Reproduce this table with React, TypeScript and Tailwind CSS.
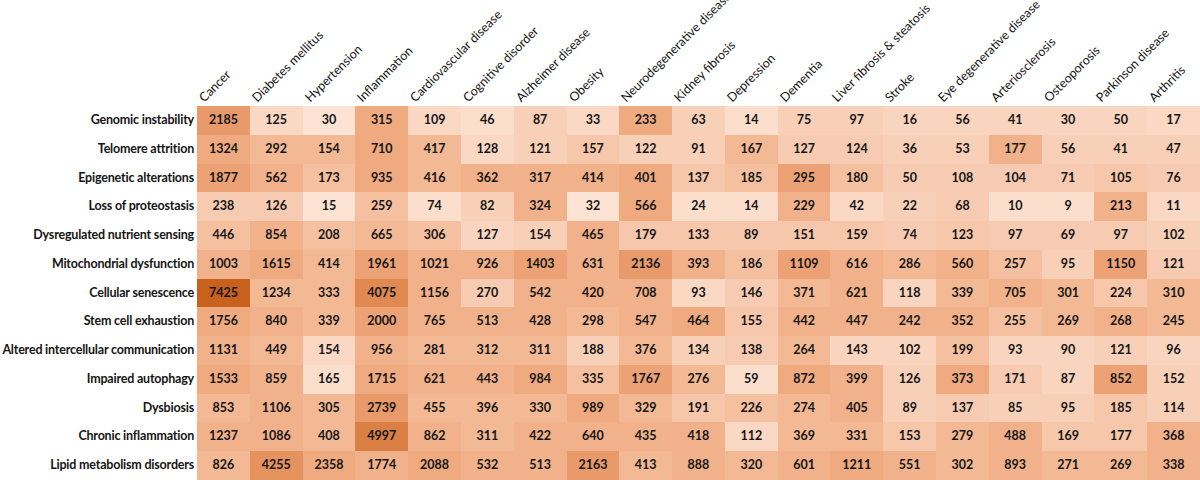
import React from "react";

const cols = [
  "Cancer",
  "Diabetes mellitus",
  "Hypertension",
  "Inflammation",
  "Cardiovascular disease",
  "Cognitive disorder",
  "Alzheimer disease",
  "Obesity",
  "Neurodegenerative disease",
  "Kidney fibrosis",
  "Depression",
  "Dementia",
  "Liver fibrosis & steatosis",
  "Stroke",
  "Eye degenerative disease",
  "Arteriosclerosis",
  "Osteoporosis",
  "Parkinson disease",
  "Arthritis",
];

type Row = { label: string; v: number[]; t: number[] };

const rows: Row[] = [
  {
    label: "Genomic instability",
    v: [2185, 125, 30, 315, 109, 46, 87, 33, 233, 63, 14, 75, 97, 16, 56, 41, 30, 50, 17],
    t: [7, 2, 1, 6, 2, 1.5, 3, 2, 6, 3, 1.5, 3, 3, 2.5, 2.5, 2.5, 2.5, 2.5, 2],
  },
  {
    label: "Telomere attrition",
    v: [1324, 292, 154, 710, 417, 128, 121, 157, 122, 91, 167, 127, 124, 36, 53, 177, 56, 41, 47],
    t: [6, 5, 5, 6, 5, 2, 3, 4, 3, 3, 5, 3.5, 3.5, 3, 3, 5.5, 3, 3, 3],
  },
  {
    label: "Epigenetic alterations",
    v: [1877, 562, 173, 935, 416, 362, 317, 414, 401, 137, 185, 295, 180, 50, 108, 104, 71, 105, 76],
    t: [6.5, 5.5, 4.5, 6, 5, 5.5, 5.5, 5.5, 6, 4, 4.5, 6.5, 4.5, 3.5, 3.5, 3.5, 3.5, 4, 3.5],
  },
  {
    label: "Loss of proteostasis",
    v: [238, 126, 15, 259, 74, 82, 324, 32, 566, 24, 14, 229, 42, 22, 68, 10, 9, 213, 11],
    t: [3.5, 3.5, 1, 4.5, 1.5, 3, 5.5, 1, 6, 1.5, 1.5, 5.5, 2, 3, 3.5, 1.5, 1.5, 5.5, 2],
  },
  {
    label: "Dysregulated nutrient sensing",
    v: [446, 854, 208, 665, 306, 127, 154, 465, 179, 133, 89, 151, 159, 74, 123, 97, 69, 97, 102],
    t: [4.5, 5.5, 4.5, 5, 4.5, 2.5, 3, 5.5, 4, 4, 4, 4, 4, 3.5, 4, 3.5, 3.5, 3.5, 3],
  },
  {
    label: "Mitochondrial dysfunction",
    v: [1003, 1615, 414, 1961, 1021, 926, 1403, 631, 2136, 393, 186, 1109, 616, 286, 560, 257, 95, 1150, 121],
    t: [5.5, 6, 5, 6.5, 5.5, 5.5, 6.5, 5.5, 7, 5.5, 4.5, 6.5, 5.5, 5, 5.5, 4.5, 3, 6.5, 3.5],
  },
  {
    label: "Cellular senescence",
    v: [7425, 1234, 333, 4075, 1156, 270, 542, 420, 708, 93, 146, 371, 621, 118, 339, 705, 301, 224, 310],
    t: [10, 5, 5, 8, 5.5, 3.5, 5.5, 5.5, 5.5, 2, 3.5, 5, 5.5, 2.5, 5, 5.5, 5, 4, 5],
  },
  {
    label: "Stem cell exhaustion",
    v: [1756, 840, 339, 2000, 765, 513, 428, 298, 547, 464, 155, 442, 447, 242, 352, 255, 269, 268, 245],
    t: [6, 5.5, 5, 6.5, 5.5, 5.5, 5.5, 5, 5.5, 6, 4, 5.5, 5.5, 5.5, 5.5, 4.5, 5, 5.5, 5],
  },
  {
    label: "Altered intercellular communication",
    v: [1131, 449, 154, 956, 281, 312, 311, 188, 376, 134, 138, 264, 143, 102, 199, 93, 90, 121, 96],
    t: [5.5, 5, 2, 5.5, 5, 5, 5, 3, 5, 3, 3.5, 5, 2.5, 2.5, 4.5, 2.5, 2.5, 3, 2.5],
  },
  {
    label: "Impaired autophagy",
    v: [1533, 859, 165, 1715, 621, 443, 984, 335, 1767, 276, 59, 872, 399, 126, 373, 171, 87, 852, 152],
    t: [6, 5.5, 1.5, 6, 5.5, 5.5, 6, 4.5, 6.5, 5, 1.5, 6, 5.5, 3, 6, 3.5, 2.5, 6.5, 3],
  },
  {
    label: "Dysbiosis",
    v: [853, 1106, 305, 2739, 455, 396, 330, 989, 329, 191, 226, 274, 405, 89, 137, 85, 95, 185, 114],
    t: [5, 5.5, 5, 7, 5, 5, 5, 6, 5, 4, 4.5, 5, 5.5, 3, 3.5, 3, 3, 4, 3],
  },
  {
    label: "Chronic inflammation",
    v: [1237, 1086, 408, 4997, 862, 311, 422, 640, 435, 418, 112, 369, 331, 153, 279, 488, 169, 177, 368],
    t: [5.5, 5.5, 5, 8.5, 5.5, 5, 5.5, 5.5, 5.5, 5.5, 2, 5, 5, 4, 5, 5.5, 4, 4, 5.5],
  },
  {
    label: "Lipid metabolism disorders",
    v: [826, 4255, 2358, 1774, 2088, 532, 513, 2163, 413, 888, 320, 601, 1211, 551, 302, 893, 271, 269, 338],
    t: [5, 7.5, 6, 5.5, 6, 5.5, 5.5, 7, 5, 5.5, 5, 5.5, 6, 5.5, 5, 5.5, 5, 5, 5.5],
  },
];

const stops: [number, [number, number, number]][] = [
  [0, [253, 238, 228]],
  [2, [250, 216, 196]],
  [4, [246, 199, 170]],
  [5, [243, 184, 148]],
  [6, [239, 170, 128]],
  [7, [233, 154, 106]],
  [8, [224, 138, 82]],
  [10, [200, 96, 30]],
];

function colorFor(t: number): string {
  for (let i = 0; i < stops.length - 1; i++) {
    const [a, ca] = stops[i];
    const [b, cb] = stops[i + 1];
    if (t >= a && t <= b) {
      const f = (t - a) / (b - a);
      const c = ca.map((x, k) => Math.round(x + (cb[k] - x) * f));
      return `rgb(${c[0]},${c[1]},${c[2]})`;
    }
  }
  const c = stops[stops.length - 1][1];
  return `rgb(${c[0]},${c[1]},${c[2]})`;
}

export default function App() {
  return (
    <div
      className="w-[1200px] h-[480px] bg-white overflow-hidden text-[#151515]"
      style={{ fontFamily: "Lato, 'Liberation Sans', sans-serif" }}
    >
      <div className="grid grid-cols-[197px_repeat(19,minmax(0,1fr))] grid-rows-[106px_repeat(13,minmax(0,1fr))] h-[480px]">
        <div />
        {cols.map((c) => (
          <div key={c} className="flex items-end pl-[9px] pb-[2px] min-w-0">
            <span className="block origin-bottom-left -rotate-45 whitespace-nowrap text-[12.5px] leading-none">
              {c}
            </span>
          </div>
        ))}
        {rows.map((r) => (
          <React.Fragment key={r.label}>
            <div className="flex items-center justify-end pr-[3px] text-[12.5px] font-bold whitespace-nowrap tracking-[-0.2px]">
              {r.label}
            </div>
            {r.v.map((v, i) => (
              <div
                key={i}
                className="flex items-center justify-center text-[12.5px] font-bold"
                style={{ backgroundColor: colorFor(r.t[i]) }}
              >
                {v}
              </div>
            ))}
          </React.Fragment>
        ))}
      </div>
    </div>
  );
}
